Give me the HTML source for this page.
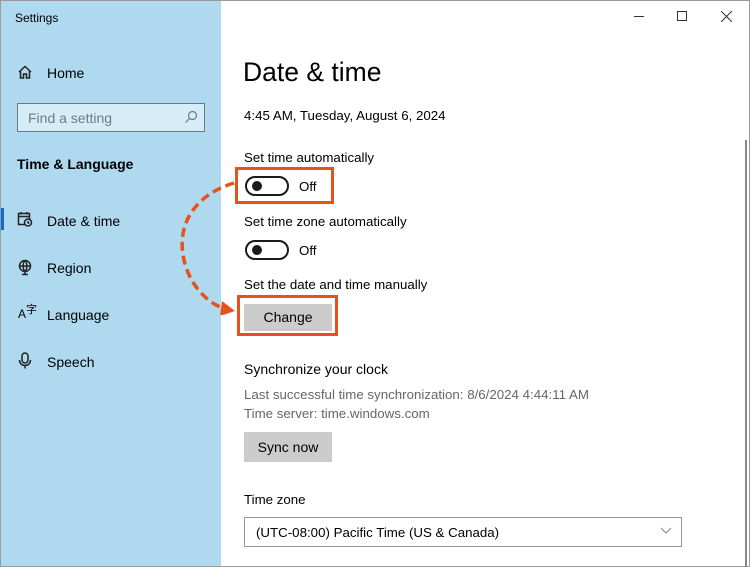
<!DOCTYPE html>
<html><head><style>
*{margin:0;padding:0;box-sizing:border-box}
body{width:750px;height:567px;overflow:hidden;font-family:"Liberation Sans",sans-serif;background:#fff;position:relative;color:#000}
.win{position:absolute;left:0;top:0;width:750px;height:567px;border:1px solid #9a9a9a}
.side{position:absolute;left:1px;top:1px;width:220px;height:565px;background:#aed9ee}
.t{position:absolute;white-space:nowrap}
.s13{font-size:13.3px}
.s14{font-size:14px}
.box{position:absolute;border:3px solid #e8501c}
.tog{position:absolute;width:44px;height:20px;border:2px solid #1a1a1a;border-radius:10px}
.tog::after{content:"";position:absolute;left:5px;top:3px;width:10px;height:10px;border-radius:50%;background:#1a1a1a}
.btn{position:absolute;background:#cccccc;font-size:14px;text-align:center}
</style></head><body>
<div class="win"></div>
<div class="side"></div>
<div class="t" style="left:15px;top:11px;font-size:12px">Settings</div>
<svg style="position:absolute;left:17px;top:64px" width="16" height="16" viewBox="0 0 16 16" fill="none" stroke="#222" stroke-width="1.5"><path d="M2 8L8 2.5 14 8M3.5 6.8V14H6.5V10H9.5V14H12.5V6.8"/></svg>
<div class="t s14" style="left:47px;top:65px">Home</div>
<div style="position:absolute;left:17px;top:103px;width:188px;height:29px;border:1.5px solid #6a7a86;background:#d6ecf7"></div>
<div class="t s14" style="left:28px;top:110px;color:#6b7c87">Find a setting</div>
<svg style="position:absolute;left:184px;top:110px" width="14" height="14" viewBox="0 0 14 14" fill="none" stroke="#6b7c87" stroke-width="1.2"><circle cx="8.5" cy="5.5" r="4"/><path d="M5.5 8.5L1.5 12.5"/></svg>
<div class="t s14" style="left:17px;top:156px;font-weight:bold">Time &amp; Language</div>
<div style="position:absolute;left:1px;top:208px;width:3px;height:22px;background:#0a6fd0"></div>
<svg style="position:absolute;left:17px;top:211px" width="16" height="16" viewBox="0 0 16 16" fill="none" stroke="#222" stroke-width="1.5"><rect x="1.5" y="2.5" width="11" height="11"/><path d="M1.5 5.5H12.5M4 1V3.5M10 1V3.5"/><circle cx="11" cy="11.5" r="3.5" fill="#aed9ee"/><path d="M11 10V11.7L12.3 12.5"/></svg>
<div class="t s14" style="left:47px;top:213px">Date &amp; time</div>
<svg style="position:absolute;left:17px;top:259px" width="16" height="17" viewBox="0 0 16 17" fill="none" stroke="#222" stroke-width="1.5"><circle cx="8" cy="7" r="5.5"/><path d="M3 7H13M8 1.5C5.5 4 5.5 10 8 12.5M8 1.5C10.5 4 10.5 10 8 12.5M8 12.5V15.5M5 15.5H11"/></svg>
<div class="t s14" style="left:47px;top:260px">Region</div>
<div class="t" style="left:18px;top:306px;font-size:12px">A<span style="font-size:11px;position:relative;top:-5px;font-family:'Noto Sans CJK SC',sans-serif">字</span></div>
<div class="t s14" style="left:47px;top:307px">Language</div>
<svg style="position:absolute;left:18px;top:352px" width="14" height="18" viewBox="0 0 14 18" fill="none" stroke="#222" stroke-width="1.5"><rect x="4" y="1" width="6" height="10" rx="3"/><path d="M1.5 8C1.5 11.5 4 13.5 7 13.5S12.5 11.5 12.5 8M7 13.5V16.5"/></svg>
<div class="t s14" style="left:47px;top:354px">Speech</div>

<div style="position:absolute;left:634px;top:16px;width:10px;height:1px;background:#333"></div>
<div style="position:absolute;left:677px;top:11px;width:10px;height:10px;border:1px solid #333"></div>
<svg style="position:absolute;left:721px;top:11px" width="11" height="11" viewBox="0 0 11 11" stroke="#333" stroke-width="1"><path d="M0 0L11 11M11 0L0 11"/></svg>
<div style="position:absolute;left:745px;top:140px;width:2px;height:427px;background:#888"></div>

<div class="t" style="left:243px;top:57px;font-size:26.5px">Date &amp; time</div>
<div class="t s13" style="left:244px;top:108px">4:45 AM, Tuesday, August 6, 2024</div>
<div class="t s13" style="left:244px;top:150px">Set time automatically</div>
<div class="tog" style="left:245px;top:176px"></div>
<div class="t s13" style="left:299px;top:179px">Off</div>
<div class="box" style="left:235px;top:167px;width:99px;height:37px"></div>
<div class="t s13" style="left:244px;top:214px">Set time zone automatically</div>
<div class="tog" style="left:245px;top:240px"></div>
<div class="t s13" style="left:299px;top:243px">Off</div>
<div class="t s13" style="left:244px;top:277px">Set the date and time manually</div>
<div class="btn" style="left:244px;top:304px;width:88px;height:27px;line-height:27px">Change</div>
<div class="box" style="left:237px;top:295px;width:101px;height:41px"></div>
<svg style="position:absolute;left:170px;top:175px" width="70" height="140" viewBox="0 0 70 140" fill="none"><path d="M64 8C30 18 5 45 14 85C20 112 40 130 56 134" stroke="#e8501c" stroke-width="3.5" stroke-dasharray="9 5"/><path d="M52 126L65 136L50 141Z" fill="#e8501c"/></svg>
<div class="t s14" style="left:244px;top:361px">Synchronize your clock</div>
<div class="t s13" style="left:244px;top:387px;color:#666">Last successful time synchronization: 8/6/2024 4:44:11 AM</div>
<div class="t s13" style="left:244px;top:406px;color:#666">Time server: time.windows.com</div>
<div class="btn" style="left:244px;top:432px;width:88px;height:30px;line-height:30px">Sync now</div>
<div class="t s13" style="left:244px;top:492px">Time zone</div>
<div style="position:absolute;left:244px;top:517px;width:438px;height:30px;border:1.5px solid #999"></div>
<div class="t s13" style="left:256px;top:525px">(UTC-08:00) Pacific Time (US &amp; Canada)</div>
<svg style="position:absolute;left:660px;top:527px" width="12" height="8" viewBox="0 0 12 8" fill="none" stroke="#888"><path d="M1 1L6 6L11 1"/></svg>
</body></html>
